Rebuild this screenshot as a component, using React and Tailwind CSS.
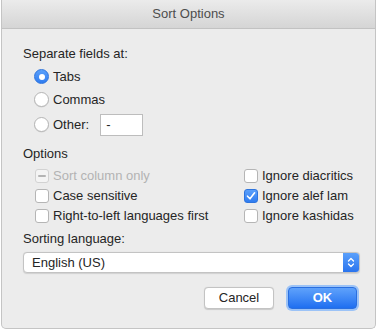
import React from 'react';

const font = { fontFamily: '"Liberation Sans", Arial, sans-serif' };

const Radio = ({ checked }) =>
  checked ? (
    <span className="w-[15px] h-[15px] rounded-full bg-gradient-to-b from-[#5aa0fb] to-[#2f7cf0] border border-[#2e74dd] flex items-center justify-center shrink-0">
      <span className="w-[6px] h-[6px] rounded-full bg-white" />
    </span>
  ) : (
    <span className="w-[15px] h-[15px] rounded-full bg-white border border-[#b5b5b5] shrink-0 shadow-[0_0.5px_0.5px_rgba(0,0,0,0.1)]" />
  );

const Check = ({ checked, disabled }) => {
  if (checked) {
    return (
      <span className="w-[14px] h-[14px] rounded-[3px] bg-gradient-to-b from-[#5aa0fb] to-[#2f7cf0] border border-[#2e74dd] flex items-center justify-center shrink-0">
        <svg width="10" height="10" viewBox="0 0 10 10">
          <path d="M1.5 5.2 L4 7.8 L8.6 1.8" fill="none" stroke="white" strokeWidth="1.6" strokeLinecap="round" strokeLinejoin="round" />
        </svg>
      </span>
    );
  }
  if (disabled) {
    return (
      <span className="w-[14px] h-[14px] rounded-[3px] bg-[#f4f4f4] border border-[#d2d2d2] flex items-center justify-center shrink-0">
        <span className="w-[8px] h-[2px] bg-[#b4b4b4] rounded-sm" />
      </span>
    );
  }
  return <span className="w-[14px] h-[14px] rounded-[3px] bg-white border border-[#b5b5b5] shrink-0" />;
};

const CheckRow = ({ label, checked, disabled }) => (
  <div className="h-[20px] flex items-center gap-[4px]">
    <Check checked={checked} disabled={disabled} />
    <span className={disabled ? 'text-[#b3b3b3]' : 'text-[#252525]'}>{label}</span>
  </div>
);

export default function App() {
  return (
    <div className="w-[379px] h-[331px] bg-white text-[13px] text-[#252525]" style={font}>
      <div className="ml-[1px] w-[375px] h-[329px] bg-[#ececec] border-x border-b border-[#c4c4c4] rounded-b-[5px] flex flex-col">
        <div className="h-[29px] bg-gradient-to-b from-[#ebebeb] to-[#d5d5d5] border-b border-[#c2c2c2] flex items-center justify-center text-[#4d4d4d] shrink-0">
          Sort Options
        </div>
        <div className="pl-[21px] pr-[16px] flex flex-col">
          <div className="mt-[17px] h-[16px] leading-[16px]">Separate fields at:</div>
          <div className="pl-[11px] mt-[3px] flex flex-col">
            <div className="h-[23px] flex items-center gap-[4px]">
              <Radio checked />
              <span>Tabs</span>
            </div>
            <div className="h-[23px] flex items-center gap-[4px]">
              <Radio />
              <span>Commas</span>
            </div>
            <div className="h-[25px] mt-[1px] flex items-center gap-[4px]">
              <Radio />
              <span>Other:</span>
              <div className="ml-[7px] w-[43px] h-[22px] bg-white border border-[#bdbdbd] flex items-center pl-[5px]">-</div>
            </div>
          </div>
          <div className="mt-[9px] h-[16px] leading-[16px]">Options</div>
          <div className="pl-[12px] mt-[4px] flex">
            <div className="w-[209px] flex flex-col">
              <CheckRow label="Sort column only" disabled />
              <CheckRow label="Case sensitive" />
              <CheckRow label="Right-to-left languages first" />
            </div>
            <div className="flex flex-col">
              <CheckRow label="Ignore diacritics" />
              <CheckRow label="Ignore alef lam" checked />
              <CheckRow label="Ignore kashidas" />
            </div>
          </div>
          <div className="mt-[5px] h-[16px] leading-[16px]">Sorting language:</div>
          <div className="mt-[5px] h-[21px] w-[337px] flex bg-white border border-[#c3c3c3] rounded-[4px] shadow-[0_0.5px_1px_rgba(0,0,0,0.12)] overflow-hidden">
            <div className="flex-1 flex items-center pl-[8px]">English (US)</div>
            <div className="w-[16px] bg-gradient-to-b from-[#5aa0fb] to-[#2a74ee] flex items-center justify-center">
              <svg width="8" height="13" viewBox="0 0 8 13">
                <path d="M1.5 5 L4 2.5 L6.5 5 M1.5 8 L4 10.5 L6.5 8" fill="none" stroke="white" strokeWidth="1.3" strokeLinecap="round" strokeLinejoin="round" />
              </svg>
            </div>
          </div>
          <div className="mt-[12px] flex justify-end items-center gap-[12px]">
            <div className="w-[70px] h-[22px] bg-white border border-[#c3c3c3] rounded-[4px] shadow-[0_0.5px_1px_rgba(0,0,0,0.15)] flex items-center justify-center">
              Cancel
            </div>
            <div className="w-[73px] h-[26px] rounded-[6px] bg-[#9cc3f7] p-[2px] flex">
              <div className="flex-1 rounded-[4px] bg-gradient-to-b from-[#5fa2fb] to-[#1e6ef0] border border-[#2a6fe0] flex items-center justify-center text-white font-bold">
                OK
              </div>
            </div>
          </div>
        </div>
      </div>
    </div>
  );
}
